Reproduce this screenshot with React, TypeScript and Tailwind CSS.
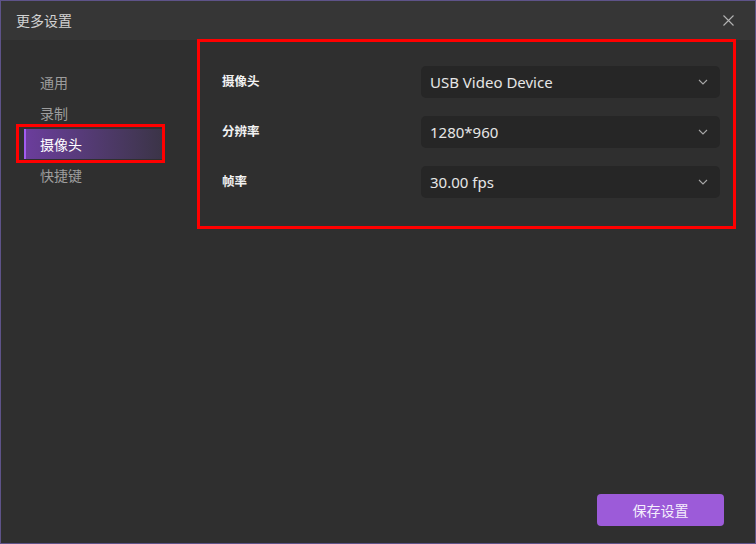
import React from "react";

const navItems = ["通用", "录制", "摄像头", "快捷键"];

const rows = [
  { label: "摄像头", value: "USB Video Device" },
  { label: "分辨率", value: "1280*960" },
  { label: "帧率", value: "30.00 fps" },
];

function Chevron() {
  return (
    <svg width="10" height="6" viewBox="0 0 10 6" fill="none">
      <path d="M1 1l4 4 4-4" stroke="#a8a8a8" strokeWidth="1.1" />
    </svg>
  );
}

export default function App() {
  return (
    <div
      className="w-[756px] h-[544px] border border-[#5e5389] bg-[#2f2f2f] flex flex-col overflow-hidden"
      style={{ fontFamily: '"Noto Sans", "Noto Sans CJK SC", sans-serif' }}
    >
      {/* title bar */}
      <div className="h-[39px] bg-[#363636] flex items-center justify-between pl-[15px] pr-[21px] shrink-0">
        <span className="text-[14px] text-[#d2d2d2]">更多设置</span>
        <svg width="11" height="11" viewBox="0 0 11 11">
          <path d="M0.5 0.5l10 10M10.5 0.5l-10 10" stroke="#b4b4b4" strokeWidth="1.1" />
        </svg>
      </div>

      <div className="flex flex-1">
        {/* side nav */}
        <div className="w-[196px] shrink-0 pt-[27px] flex flex-col gap-[1px]">
          {navItems.map((item) => {
            const active = item === "摄像头";
            return (
              <div key={item} className="relative ml-[23px] w-[139px] h-[30px]">
                {active && (
                  <div className="absolute -left-[8px] -top-[5px] w-[149px] h-[39px] border-[3px] border-[#ff0000]" />
                )}
                <div
                  className={
                    active
                      ? "h-full flex items-center pl-[14px] border-l-2 border-[#a25bf0] bg-gradient-to-r from-[#6b3d9c] to-[#3b3447] text-white text-[14px]"
                      : "h-full flex items-center pl-[16px] text-[#9d9d9d] text-[14px]"
                  }
                >
                  {item}
                </div>
              </div>
            );
          })}
        </div>

        {/* content */}
        <div className="flex-1 flex flex-col">
          <div className="-mt-[1px] mr-[19px] border-[3px] border-[#ff0000] pt-[24px] pb-[28px] pl-[22px] pr-[13px] flex flex-col gap-[18px]">
            {rows.map((row) => (
              <div key={row.label} className="flex items-center">
                <span className="w-[199px] pt-[1px] text-[12.5px] font-bold text-[#f2f2f2]">{row.label}</span>
                <div className="w-[299px] h-[32px] rounded-[5px] bg-[#262626] flex items-center justify-between pl-[9px] pr-[12px]">
                  <span className="pt-[1px] text-[15px] text-[#e6e6e6]">{row.value}</span>
                  <Chevron />
                </div>
              </div>
            ))}
          </div>
          <div className="flex-1" />
          <button className="self-end mr-[31px] mb-[17px] w-[127px] h-[32px] rounded-[4px] bg-[#9c5bd9] text-[14px] text-[#f4eefc]">
            保存设置
          </button>
        </div>
      </div>
    </div>
  );
}
